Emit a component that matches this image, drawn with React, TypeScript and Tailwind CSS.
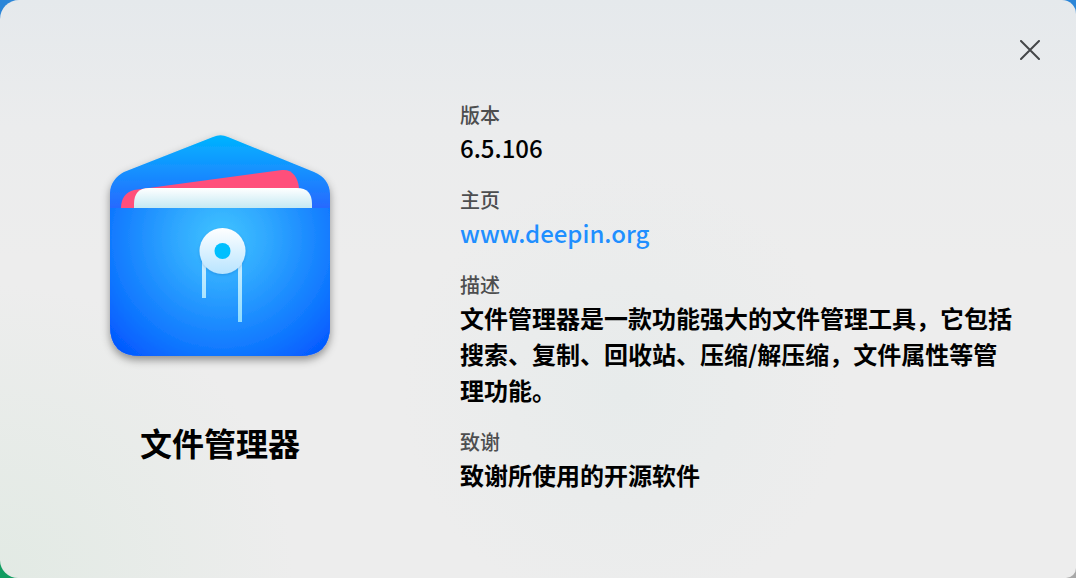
import React from 'react';

function FileManagerIcon() {
  return (
    <svg className="w-[260px]" viewBox="90 120 260 260" aria-hidden="true">
      <defs>
        <linearGradient id="flap" x1="0" y1="135" x2="0" y2="215" gradientUnits="userSpaceOnUse">
          <stop offset="0" stopColor="#00b4ff" />
          <stop offset="0.45" stopColor="#1590ff" />
          <stop offset="1" stopColor="#2a62ff" />
        </linearGradient>
        <radialGradient id="pocket" cx="222" cy="238" r="162" gradientUnits="userSpaceOnUse">
          <stop offset="0" stopColor="#40c4ff" />
          <stop offset="0.3" stopColor="#2ea6ff" />
          <stop offset="0.7" stopColor="#1078ff" />
          <stop offset="1" stopColor="#0050ff" />
        </radialGradient>
        <linearGradient id="paper" x1="0" y1="188" x2="0" y2="208" gradientUnits="userSpaceOnUse">
          <stop offset="0" stopColor="#ffffff" />
          <stop offset="1" stopColor="#c4e9f3" />
        </linearGradient>
        <linearGradient id="button" x1="0" y1="228" x2="0" y2="274" gradientUnits="userSpaceOnUse">
          <stop offset="0" stopColor="#ffffff" />
          <stop offset="1" stopColor="#b8e4ff" />
        </linearGradient>
        <linearGradient id="string" x1="0" y1="260" x2="0" y2="322" gradientUnits="userSpaceOnUse">
          <stop offset="0" stopColor="#d0efff" />
          <stop offset="1" stopColor="#8edcff" />
        </linearGradient>
        <filter id="shadow" x="-20%" y="-20%" width="140%" height="140%">
          <feDropShadow dx="0" dy="4" stdDeviation="4" floodColor="#000" floodOpacity="0.4" />
        </filter>
        <filter id="soft" x="-20%" y="-20%" width="140%" height="140%">
          <feDropShadow dx="0" dy="1" stdDeviation="1.5" floodColor="#0050b0" floodOpacity="0.3" />
        </filter>
      </defs>
      <g filter="url(#shadow)">
        <path
          d="M110 208V193C110 184 116 176 124 172L213 137Q220.500 133.500 228 137L314 172C324 176 330 184 330 194V326Q330 356 300 356H140Q110 356 110 326Z"
          fill="url(#flap)"
        />
        <path d="M110 208H330V326Q330 356 300 356H140Q110 356 110 326Z" fill="url(#pocket)" />
      </g>
      {/* papers */}
      <path d="M121 208C121 198 126 192 134 190L282 170C292 169 298 177 299 188V208Z" fill="#ff4f7b" />
      <path d="M134 208V204Q134 188 149 188H297Q312 188 312 204V208Z" fill="url(#paper)" />
      {/* string and button */}
      <path d="M202 254H206V298H202ZM238 254H242V322H238Z" fill="url(#string)" />
      <circle cx="222.500" cy="251" r="23" fill="url(#button)" filter="url(#soft)" />
      <circle cx="222.500" cy="251" r="8" fill="#00bfff" />
    </svg>
  );
}

function InfoItem({ label, children }: { label: string; children: React.ReactNode }) {
  return (
    <div>
      <dt className="text-xl leading-[30px] font-medium text-[#4d4e4f]">{label}</dt>
      <dd className="text-2xl leading-[36px] font-bold text-black">{children}</dd>
    </div>
  );
}

function App() {
  const appInfo = {
    name: '文件管理器',
    version: '6.5.106',
    homepage: 'www.deepin.org',
    description:
      '文件管理器是一款功能强大的文件管理工具，它包括搜索、复制、回收站、压缩/解压缩，文件属性等管理功能。',
    credits: '致谢所使用的开源软件',
  };

  return (
    <div
      lang="zh-CN"
      className="flex min-h-screen bg-[linear-gradient(90deg,#109c60_50%,#a8a8a8_50%)] font-['Noto_Sans_CJK_SC',sans-serif]"
    >
      <div className="flex flex-1 bg-[linear-gradient(180deg,#2c86d8_0,#2c86d8_40px,transparent_40px)]">
        <main className="flex-1 rounded-tl-[19px] rounded-tr-[14px] rounded-bl-[18px] rounded-br-[10px] bg-[#ededed] bg-[radial-gradient(circle_at_0%_100%,#e2eae4_0,transparent_24%),radial-gradient(circle_at_58%_68%,#e7ebeb_0,transparent_30%),linear-gradient(180deg,#e5e9ec_0,#ebeced_22%,transparent_45%)]">
          <header className="flex h-[100px] items-center justify-end pr-[30px]">
            <button type="button" aria-label="关闭" className="flex size-8 items-center justify-center text-[#444648]">
              <svg className="size-5" viewBox="0 0 20 20" fill="none" stroke="currentColor" strokeWidth="2" strokeLinecap="round">
                <path d="M1 1L19 19M19 1L1 19" />
              </svg>
            </button>
          </header>
          <div className="flex">
            <section className="flex w-[440px] shrink-0 flex-col items-center pt-5">
              <FileManagerIcon />
              <h1 className="mt-[38px] text-[32px] leading-[48px] font-bold text-black">{appInfo.name}</h1>
            </section>
            <dl className="flex flex-1 flex-col gap-[19px] pr-[60px] pb-16 pl-5">
              <InfoItem label="版本">
                <span className="font-medium">{appInfo.version}</span>
              </InfoItem>
              <InfoItem label="主页">
                <a href="https://www.deepin.org" className="font-medium text-[#1f8fff]">
                  {appInfo.homepage}
                </a>
              </InfoItem>
              <InfoItem label="描述">{appInfo.description}</InfoItem>
              <InfoItem label="致谢">{appInfo.credits}</InfoItem>
            </dl>
          </div>
        </main>
      </div>
    </div>
  );
}

export default App;
